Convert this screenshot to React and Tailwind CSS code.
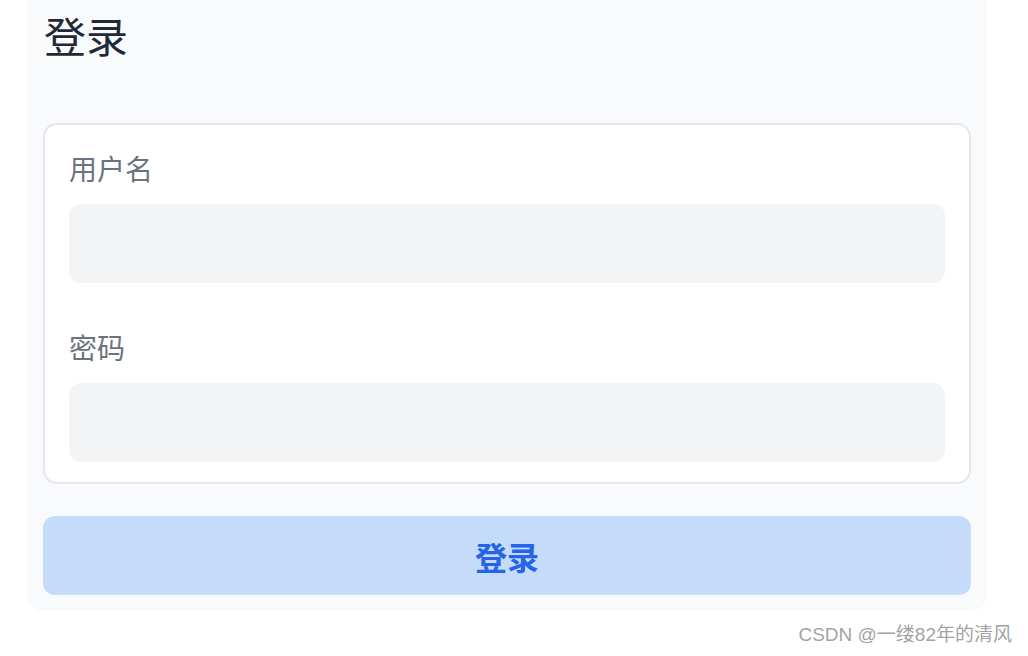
import React from 'react';

const FONT = { fontFamily: '"Noto Sans CJK SC", "Noto Sans", sans-serif' };

export default function App() {
  return (
    <div className="w-[1028px] h-[656px] bg-white overflow-hidden" style={FONT}>
      <div className="ml-[27px] w-[960px] bg-[#f9fafb] rounded-b-2xl px-4 pt-[10px] pb-4">
        <h1 className="text-[42px] leading-[50px] text-[#1f2937] font-normal mb-[63px] ml-px">登录</h1>

        {/* form card */}
        <div className="bg-white border-2 border-[#e5e7eb] rounded-[14px] px-6 pt-[25px] pb-5">
          <label className="block text-[28px] leading-[36px] text-[#6b7280] mb-[18px]">用户名</label>
          <div className="h-[79px] rounded-xl bg-[#f3f4f6]" />

          <label className="block text-[28px] leading-[36px] text-[#6b7280] mt-[46px] mb-[18px]">密码</label>
          <div className="h-[79px] rounded-xl bg-[#f3f4f6]" />
        </div>

        <button className="mt-[32px] w-full h-[79px] rounded-xl bg-[#c4dcf9] text-[#2563eb] text-[32px] font-bold flex items-center justify-center">
          登录
        </button>
      </div>

      <div
        className="mt-3 pr-4 text-right text-[19px] leading-[24px] text-[#a3a3a3]"
        style={{ fontFamily: '"Liberation Sans", "Noto Sans CJK SC", sans-serif' }}
      >
        CSDN @一缕82年的清风
      </div>
    </div>
  );
}
